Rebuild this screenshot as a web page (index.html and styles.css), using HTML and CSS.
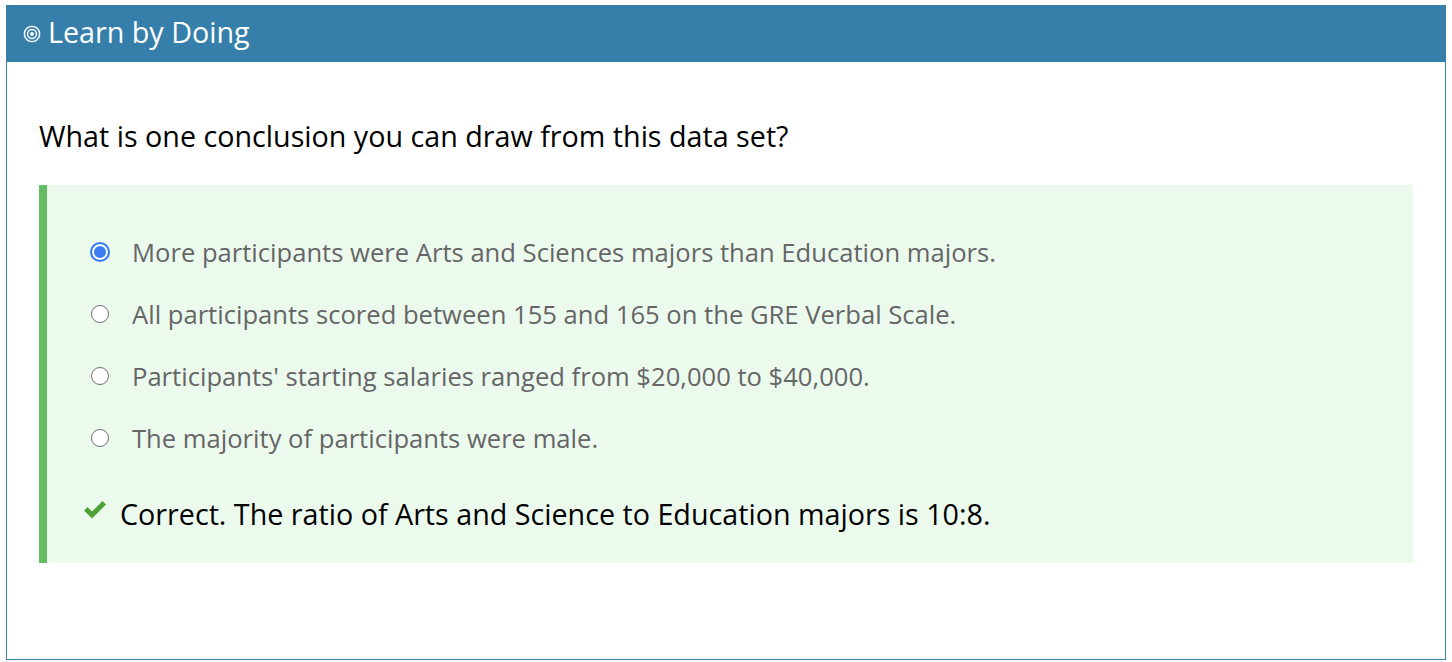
FILE: index.html
```html
<!DOCTYPE html>
<html>

<head>
    <title>Learn by Doing</title>

    <link rel="stylesheet" href="styles.css">
</head>

<body>

    <section class="activity">

        <header class="activity-header">
            <svg class="activity-icon" viewBox="0 0 20 20" width="18" height="18">
                <circle cx="10" cy="10" r="8.5" fill="none" stroke="#fff" stroke-width="1.6"/>
                <circle cx="10" cy="10" r="5" fill="none" stroke="#fff" stroke-width="1.6"/>
                <circle cx="10" cy="10" r="2.2" fill="#fff"/>
            </svg>
            <h1>Learn by Doing</h1>
        </header>

        <div class="activity-body">

            <p class="question">What is one conclusion you can draw from this data set?</p>

            <div class="answer-panel">

                <ul class="choices">
                    <li class="choice">
                        <span class="radio checked"></span>
                        <span>More participants were Arts and Sciences majors than Education majors.</span>
                    </li>
                    <li class="choice">
                        <span class="radio"></span>
                        <span>All participants scored between 155 and 165 on the GRE Verbal Scale.</span>
                    </li>
                    <li class="choice">
                        <span class="radio"></span>
                        <span>Participants' starting salaries ranged from $20,000 to $40,000.</span>
                    </li>
                    <li class="choice">
                        <span class="radio"></span>
                        <span>The majority of participants were male.</span>
                    </li>
                </ul>

                <div class="feedback">
                    <svg class="check" viewBox="0 0 24 20" width="24" height="21">
                        <path d="M1 11 L4.5 7.5 L9 12 L19.5 1.5 L23 5 L9 19 Z" fill="#4ea236"/>
                    </svg>
                    <span>Correct. The ratio of Arts and Science to Education majors is 10:8.</span>
                </div>

            </div>

        </div>

    </section>

</body>

</html>
```

FILE: styles.css
```css
* {
    margin: 0;
    padding: 0;
    box-sizing: border-box;
}

body {
    padding: 5px 6px;
    font-family: "Open Sans", "Noto Sans", sans-serif;
    background-color: #fff;
}

.activity {
    width: 1440px;
    height: 655px;
    border: 1px solid #377fab;
}

.activity-header {
    display: flex;
    align-items: center;
    height: 57px;
    margin: -1px -1px 0 -1px;
    padding-left: 17px;
    background-color: #377fab;
    color: #fff;
}

.activity-icon {
    margin-right: 7px;
}

.activity-header h1 {
    font-size: 28.7px;
    font-weight: 400;
    line-height: 1;
    margin-top: -2px;
}

.activity-body {
    padding: 0 32px;
}

.question {
    padding: 56px 0 31px 0;
    font-size: 28.7px;
    line-height: 36px;
    color: #000;
}

.answer-panel {
    height: 378px;
    padding: 36px 0 0 0;
    border-left: 8px solid #62be60;
    background-color: #ecfaee;
}

.choices {
    list-style-type: none;
    padding-left: 44px;
}

.choice {
    display: flex;
    align-items: center;
    height: 62px;
    font-size: 25.6px;
    color: #666;
}

.radio {
    width: 18px;
    height: 18px;
    margin-right: 23px;
    border: 1px solid #6f6f6f;
    border-radius: 50%;
    background-color: #fff;
}

.radio.checked {
    width: 20px;
    height: 20px;
    margin-left: -1px;
    margin-right: 22px;
    border: 2px solid #3b7cf4;
    box-shadow: inset 0 0 0 2px #fff;
    background-color: #3b7cf4;
}

.feedback {
    display: flex;
    align-items: center;
    margin-top: 25px;
    padding-left: 36px;
    font-size: 28.7px;
    color: #000;
}

.check {
    margin-right: 13px;
    margin-top: -9px;
}
```
